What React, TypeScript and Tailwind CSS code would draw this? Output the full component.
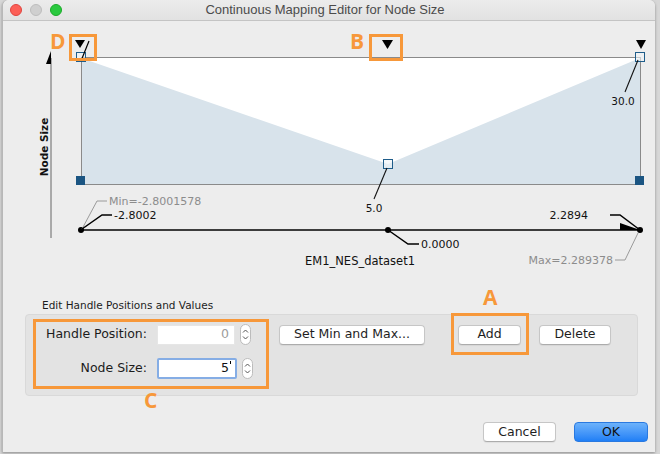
import React from "react"

// macOS-style dialog: chart on top, handle editor below
function Spinner() {
  return (
    <div className="ml-[5px] w-[11px] h-[21px] rounded-full bg-white border border-[#bcbcbc] flex items-center justify-center">
      <svg width="9" height="17" viewBox="0 0 9 17">
        <path d="M2 6.5 L4.5 4 L7 6.5" stroke="#555" fill="none" strokeWidth="1" />
        <path d="M2 10.5 L4.5 13 L7 10.5" stroke="#555" fill="none" strokeWidth="1" />
      </svg>
    </div>
  )
}

function MacButton({ label, className }: { label: string; className: string }) {
  return (
    <div
      className={
        "h-[20px] bg-white border border-[#c6c6c6] border-b-[#acacac] rounded-[4px] shadow-[0_1px_1px_rgba(0,0,0,0.06)] flex items-center justify-center text-[12.5px] text-[#1e1e1e] " +
        className
      }
    >
      {label}
    </div>
  )
}

function Chart() {
  const black = "#111"
  const gray = "#8c8c8c"
  return (
    <svg width="652" height="262" viewBox="3 21 652 262" className="block">
      <g fontFamily="DejaVu Sans, sans-serif">
        {/* y axis */}
        <line x1="51" y1="58" x2="51" y2="238" stroke="#666" strokeWidth="1" />
        <polygon points="51,51 51,64 46,64" fill="#000" />
        <text transform="translate(47.5,147) rotate(-90)" textAnchor="middle" fontSize="10.5" fontWeight="bold" fill={black}>
          Node Size
        </text>

        {/* plot */}
        <rect x="81" y="58" width="559" height="127" fill="#fff" />
        <polygon points="81,58 388,164 640,58 640,185 81,185" fill="#d8e3eb" />
        <rect x="81.5" y="57.5" width="559" height="127" fill="none" stroke="#8a8a8a" />

        <rect x="76" y="176" width="9" height="9" fill="#1b5582" />
        <rect x="635" y="176" width="9" height="9" fill="#1b5582" />

        <rect x="76.5" y="52.5" width="9" height="9" fill="#eef3f6" fillOpacity="0.6" stroke="#1f5d8a" />
        <rect x="383.5" y="159.5" width="9" height="9" fill="#eef3f6" fillOpacity="0.6" stroke="#1f5d8a" />
        <rect x="635.5" y="52.5" width="9" height="9" fill="#eef3f6" fillOpacity="0.6" stroke="#1f5d8a" />

        {/* handle triangles */}
        <polygon points="75,40 85,40 80,48" fill="#000" />
        <line x1="89" y1="41" x2="81" y2="61" stroke="#000" strokeWidth="1.2" />
        <polygon points="382,40 393,40 387.5,49" fill="#000" />
        <polygon points="636,40 646,40 641,49" fill="#000" />

        {/* value labels */}
        <line x1="638" y1="60" x2="625" y2="92" stroke={black} strokeWidth="1.1" />
        <text x="623" y="105" textAnchor="middle" fontSize="10.5" fill={black}>30.0</text>
        <line x1="387" y1="168" x2="374" y2="199" stroke={black} strokeWidth="1.1" />
        <text x="374" y="212" textAnchor="middle" fontSize="10.5" fill={black}>5.0</text>

        {/* x axis */}
        <line x1="81" y1="230" x2="640" y2="230" stroke="#000" strokeWidth="1.4" />
        <polygon points="620,223 640,230 620,230" fill="#000" />
        <circle cx="81" cy="230" r="3" fill="#000" />
        <circle cx="388" cy="230" r="3" fill="#000" />
        <circle cx="640" cy="230" r="3" fill="#000" />

        <polyline points="82,229 97,201 107,201" fill="none" stroke="#9a9a9a" strokeWidth="1" />
        <text x="109" y="205" fontSize="11" fill={gray}>Min=-2.8001578</text>
        <polyline points="82,229 102,215 112,215" fill="none" stroke="#000" strokeWidth="1.5" />
        <text x="114" y="219" fontSize="11" fill={black}>-2.8002</text>

        <polyline points="388,230 408,244 419,244" fill="none" stroke="#000" strokeWidth="1.5" />
        <text x="421" y="248" fontSize="11" fill={black}>0.0000</text>

        <polyline points="610,215 620,215 640,230" fill="none" stroke="#000" strokeWidth="1.5" />
        <text x="588" y="219" textAnchor="end" fontSize="11" fill={black}>2.2894</text>
        <polyline points="638,233 625,260 615,260" fill="none" stroke="#9a9a9a" strokeWidth="1" />
        <text x="613" y="264" textAnchor="end" fontSize="11" fill={gray}>Max=2.289378</text>

        <text x="360" y="265" textAnchor="middle" fontSize="11.5" fill={black}>EM1_NES_dataset1</text>
      </g>
    </svg>
  )
}

export default function App() {
  return (
    <div className="w-[660px] h-[454px] bg-[#d7d7d7] overflow-hidden pl-[2px] font-['DejaVu_Sans',sans-serif]">
      <div className="relative w-[653px] h-[452px] bg-[#ededed] rounded-t-[6px] border-l border-[#b8b8b8] shadow-[0_1px_3px_rgba(0,0,0,0.35)]">
        {/* title bar */}
        <div className="h-[21px] flex items-center bg-gradient-to-b from-[#ececec] to-[#e2e2e2] border-b border-[#c4c4c4] rounded-t-[6px]">
          <div className="flex items-center gap-[8px] pl-[7px] w-[60px]">
            <div className="w-[12px] h-[12px] rounded-full bg-[#fc5f57] border border-[#e0443e]" />
            <div className="w-[12px] h-[12px] rounded-full bg-[#cfcfcf] border border-[#bdbdbd]" />
            <div className="w-[12px] h-[12px] rounded-full bg-[#2ac93f] border border-[#1aab29]" />
          </div>
          <div className="flex-1 text-center text-[13px] text-[#4b4b4b] font-['Liberation_Sans',sans-serif] pr-[68px]">
            Continuous Mapping Editor for Node Size
          </div>
        </div>

        <Chart />

        <div className="mt-[16px] ml-[39px] text-[10.5px] leading-[13px] text-[#1c1c1c]">
          Edit Handle Positions and Values
        </div>

        {/* editor panel */}
        <div className="mt-[2px] ml-[22px] w-[613px] h-[82px] bg-[#e3e3e3] border border-[#d9d9d9] rounded-[4px] pt-[9px]">
          <div className="flex items-center h-[21px]">
            <div className="w-[121px] text-right text-[12.5px] text-[#1c1c1c]">Handle Position:</div>
            <div className="ml-[10px] w-[78px] h-[20px] bg-white border border-[#e6e6e6] flex items-center justify-end pr-[5px] text-[12.5px] text-[#9c9c9c]">
              0
            </div>
            <Spinner />
            <MacButton label="Set Min and Max..." className="ml-[28px] w-[146px]" />
            <MacButton label="Add" className="ml-[33px] w-[63px]" />
            <MacButton label="Delete" className="ml-[18px] w-[72px]" />
          </div>
          <div className="flex items-center h-[21px] mt-[13px]">
            <div className="w-[121px] text-right text-[12.5px] text-[#1c1c1c]">Node Size:</div>
            <div className="ml-[10px] w-[80px] h-[21px] bg-white border-2 border-[#85ade5] rounded-[2px] flex items-center justify-end pr-[4px] text-[12.5px] text-[#111]">
              5<span className="ml-[1px] w-px h-[3px] bg-black self-start mt-[1px]" />
            </div>
            <Spinner />
          </div>
        </div>

        {/* dialog buttons */}
        <div className="flex justify-end gap-[18px] pr-[7px] mt-[26px]">
          <MacButton label="Cancel" className="w-[73px]" />
          <div className="w-[74px] h-[20px] rounded-[4px] bg-gradient-to-b from-[#6cb2fb] to-[#1f7ff6] border border-[#2a79e0] flex items-center justify-center text-[12.5px] text-[#111]">
            OK
          </div>
        </div>

        {/* orange annotations */}
        <div className="absolute left-[47px] top-[31px] text-[21px] leading-[21px] font-bold text-[#f7983a] font-['Open_Sans',sans-serif]">D</div>
        <div className="absolute left-[66px] top-[34px] w-[28px] h-[27px] border-[3px] border-[#f7983a]" />
        <div className="absolute left-[347px] top-[31px] text-[21px] leading-[21px] font-bold text-[#f7983a] font-['Open_Sans',sans-serif]">B</div>
        <div className="absolute left-[366px] top-[34px] w-[34px] h-[27px] border-[3px] border-[#f7983a]" />
        <div className="absolute left-[480px] top-[287px] text-[21px] leading-[21px] font-bold text-[#f7983a] font-['Open_Sans',sans-serif]">A</div>
        <div className="absolute left-[448px] top-[313px] w-[78px] h-[42px] border-[3px] border-[#f7983a]" />
        <div className="absolute left-[141px] top-[390px] text-[21px] leading-[21px] font-bold text-[#f7983a] font-['Open_Sans',sans-serif]">C</div>
        <div className="absolute left-[30px] top-[319px] w-[236px] h-[70px] border-[3px] border-[#f7983a]" />
      </div>
    </div>
  )
}
